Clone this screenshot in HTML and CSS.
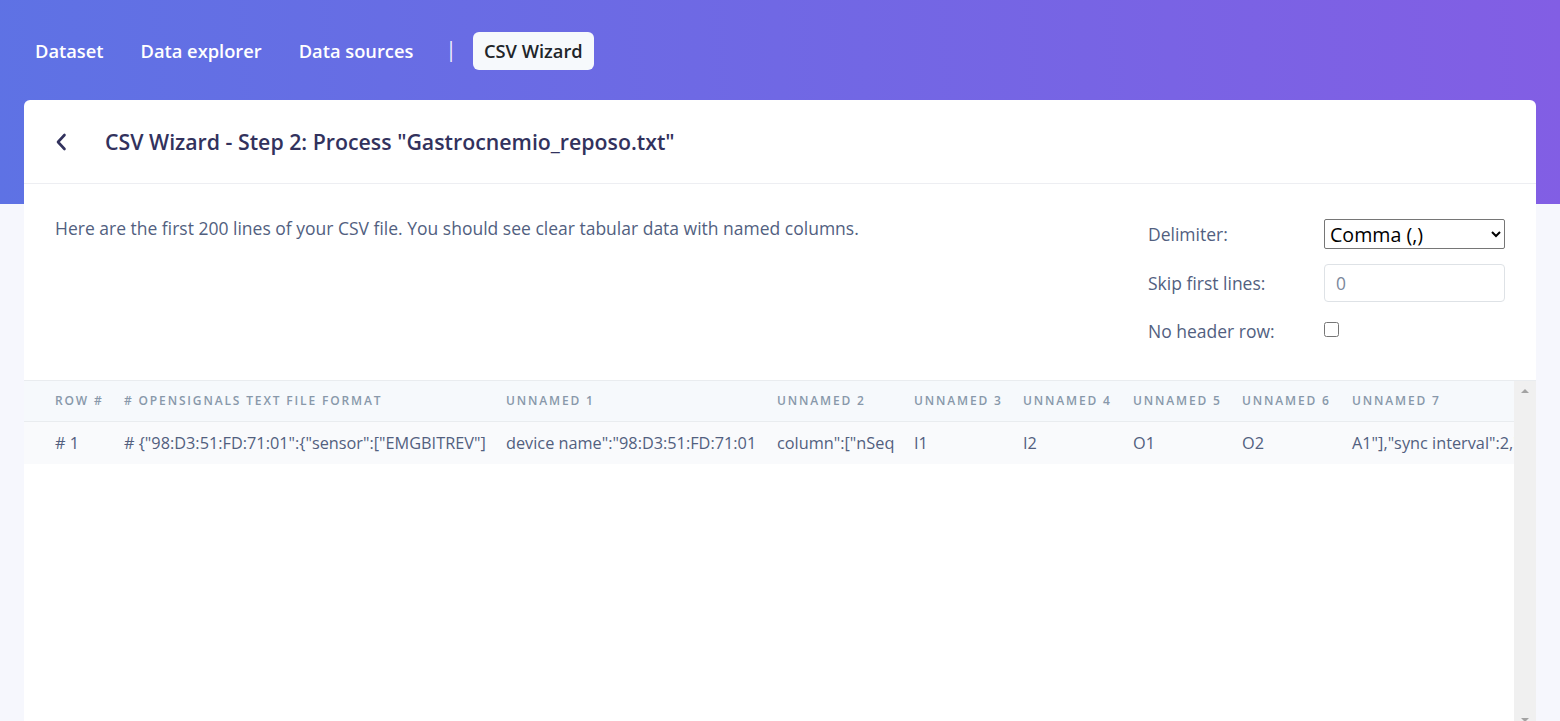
FILE: index.html
```html
<!DOCTYPE html>
<html lang="en">
<head>
<meta charset="utf-8">
<title>CSV Wizard</title>
<link rel="stylesheet" href="styles.css">
</head>
<body>
<div class="band">
  <nav class="nav">
    <a class="nav-item">Dataset</a>
    <a class="nav-item">Data explorer</a>
    <a class="nav-item">Data sources</a>
    <span class="nav-sep">|</span>
    <a class="nav-item active">CSV Wizard</a>
  </nav>
</div>
<main class="card">
  <header class="card-header">
    <svg class="back" width="12" height="18" viewBox="0 0 12 18"><path d="M9.5 2 L3 9 L9.5 16" fill="none" stroke="#32325d" stroke-width="2.6" stroke-linecap="round" stroke-linejoin="round"/></svg>
    <h1 class="title">CSV Wizard - Step 2: Process "Gastrocnemio_reposo.txt"</h1>
  </header>
  <section class="card-body">
    <p class="intro">Here are the first 200 lines of your CSV file. You should see clear tabular data with named columns.</p>
    <div class="form">
      <label class="lbl">Delimiter:</label>
      <select class="sel"><option>Comma (,)</option></select>
      <label class="lbl">Skip first lines:</label>
      <input class="inp" type="text" value="0">
      <label class="lbl">No header row:</label>
      <div class="chk-wrap"><input class="chk" type="checkbox"></div>
    </div>
  </section>
  <section class="table-area">
    <div class="table-scroll">
      <table class="grid">
        <thead>
          <tr>
            <th class="c0">Row #</th>
            <th class="c1"># OpenSignals Text File Format</th>
            <th class="c2">Unnamed 1</th>
            <th class="c3">Unnamed 2</th>
            <th class="c4">Unnamed 3</th>
            <th class="c5">Unnamed 4</th>
            <th class="c6">Unnamed 5</th>
            <th class="c7">Unnamed 6</th>
            <th class="c8">Unnamed 7</th>
          </tr>
        </thead>
        <tbody>
          <tr>
            <td class="c0"># 1</td>
            <td class="c1"># {"98:D3:51:FD:71:01":{"sensor":["EMGBITREV"]</td>
            <td class="c2">device name":"98:D3:51:FD:71:01</td>
            <td class="c3">column":["nSeq</td>
            <td class="c4">I1</td>
            <td class="c5">I2</td>
            <td class="c6">O1</td>
            <td class="c7">O2</td>
            <td class="c8">A1"],"sync interval":2,"time":"10:49:27.617"</td>
          </tr>
        </tbody>
      </table>
    </div>
    <div class="vscroll">
      <span class="arrow-up"></span>
      <span class="arrow-down"></span>
    </div>
  </section>
</main>
</body>
</html>
```

FILE: styles.css
```css
* { box-sizing: border-box; }
html, body { margin: 0; padding: 0; }
body {
  background: #f6f7fd;
  font-family: "Open Sans", "Noto Sans", sans-serif;
  color: #525f7f;
  height: 721px;
  overflow: hidden;
}
.band {
  height: 204px;
  background: linear-gradient(87deg, #5e72e4 0%, #825ee4 100%);
  padding: 32px 24px 0;
}
.nav {
  display: flex;
  align-items: center;
  height: 38px;
}
.nav-item {
  color: #fff;
  font-weight: 600;
  font-size: 18.3px;
  padding: 0 11px;
  height: 38px;
  line-height: 38px;
  margin-right: 15px;
  border-radius: 6px;
}
.nav-sep {
  color: #fff;
  font-size: 21px;
  margin: 0 16px 4px 6px;
  opacity: 0.9;
}
.nav-item.active {
  background: #f6f9fc;
  color: #212529;
}
.card {
  margin: -104px 24px 0;
  background: #fff;
  border-radius: 6px 6px 0 0;
  height: 640px;
  overflow: hidden;
}
.card-header {
  height: 84px;
  border-bottom: 1px solid #edeef2;
  display: flex;
  align-items: center;
  padding: 0 31px;
}
.back { margin: 1px 38px 0 0; }
.title {
  margin: 0;
  font-size: 21.3px;
  font-weight: 600;
  color: #32325d;
}
.card-body {
  display: flex;
  justify-content: space-between;
  padding: 34px 31px 35px;
}
.intro {
  margin: 0;
  font-size: 17.5px;
  line-height: 20px;
  color: #525f7f;
}
.form {
  display: grid;
  grid-template-columns: 175px 181px;
  row-gap: 15px;
  align-items: center;
}
.lbl {
  font-size: 17.5px;
  color: #525f7f;
  margin-left: -1px;
}
.sel {
  width: 181px;
  height: 30px;
  font-family: "Open Sans", sans-serif;
  font-size: 19.6px;
  color: #000;
  border: 1px solid #767676;
  border-radius: 2px;
  background: #fff;
  padding: 0 1px;
  margin-top: 1px;
}
.inp {
  width: 181px;
  height: 38px;
  border: 1px solid #dee2e6;
  border-radius: 4px;
  padding: 0 11px;
  font-family: "Open Sans", sans-serif;
  font-size: 17.4px;
  color: #7b879b;
}
.chk-wrap {
  height: 28px;
  display: flex;
  align-items: center;
}
.chk {
  width: 15px;
  height: 15px;
  margin: 0 0 3px 0;
}
.table-area {
  display: flex;
  border-top: 1px solid #e9ecef;
  height: 345px;
}
.table-scroll {
  flex: 1;
  overflow: hidden;
}
.grid {
  border-collapse: collapse;
  table-layout: fixed;
  width: 1600px;
}
.grid th, .grid td {
  text-align: left;
  white-space: nowrap;
  overflow: hidden;
  padding: 0 15px;
}
.grid th {
  background: #f6f9fc;
  height: 40px;
  border-bottom: 1px solid #e9ecef;
  font-size: 12px;
  font-weight: 600;
  letter-spacing: 1.85px;
  text-transform: uppercase;
  color: #8898aa;
}
.grid td {
  background: #f9fafc;
  height: 43px;
  font-size: 16.3px;
  color: #525f7f;
}
.grid .c0 { width: 85px; padding-left: 31px; }
.grid .c1 { width: 382px; }
.grid .c2 { width: 271px; }
.grid .c3 { width: 137px; }
.grid .c4 { width: 109px; }
.grid .c5 { width: 110px; }
.grid .c6 { width: 109px; }
.grid .c7 { width: 110px; }
.grid .c8 { width: 287px; }
.vscroll {
  width: 22px;
  background: #f0f0f0;
  position: relative;
}
.arrow-up {
  position: absolute;
  top: 8px;
  left: 7px;
  width: 0;
  height: 0;
  border-left: 4px solid transparent;
  border-right: 4px solid transparent;
  border-bottom: 4px solid #a3a3a3;
}
.arrow-down {
  position: absolute;
  bottom: 3px;
  left: 7px;
  width: 0;
  height: 0;
  border-left: 4px solid transparent;
  border-right: 4px solid transparent;
  border-top: 4px solid #a3a3a3;
}
```
